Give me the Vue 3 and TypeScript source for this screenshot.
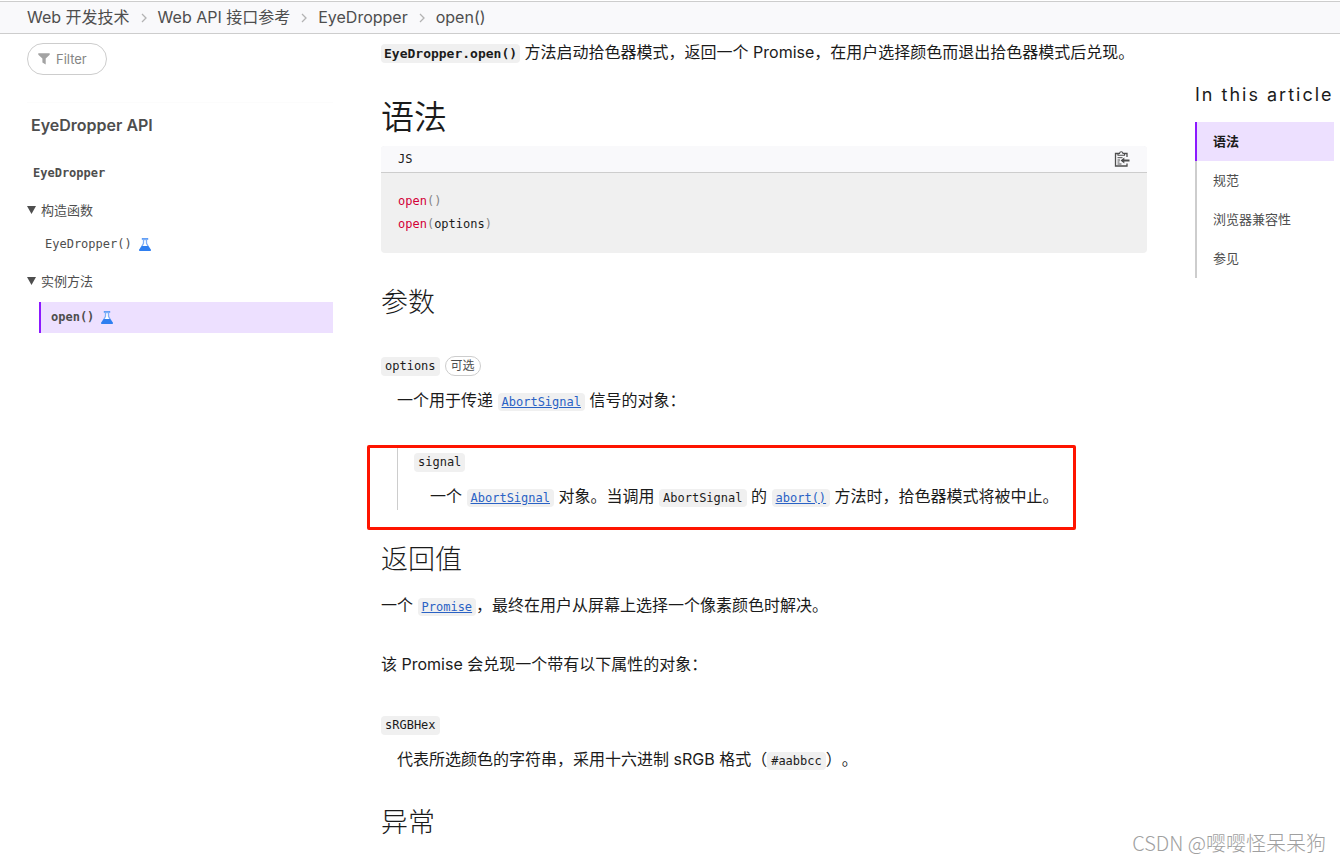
<script setup lang="ts">
interface TocItem {
  label: string
  active: boolean
}

const crumbs: string[] = ['Web 开发技术', 'Web API 接口参考', 'EyeDropper', 'open()']

const toc: TocItem[] = [
  { label: '语法', active: true },
  { label: '规范', active: false },
  { label: '浏览器兼容性', active: false },
  { label: '参见', active: false },
]
</script>

<template>
  <div class="page">
    <nav class="breadcrumbs" aria-label="Breadcrumb">
      <ol class="crumb-list">
        <li v-for="(crumb, i) in crumbs" :key="crumb" class="crumb">
          <svg v-if="i > 0" class="chevron" viewBox="0 0 6 10" aria-hidden="true">
            <path d="M1 1l4 4-4 4" fill="none" stroke="#b3b3b3" stroke-width="1.3" />
          </svg>
          <a href="#" class="crumb-link">{{ crumb }}</a>
        </li>
      </ol>
    </nav>

    <div class="columns">
      <aside class="sidebar">
        <label class="filter">
          <svg class="funnel" viewBox="0 0 12 12" aria-hidden="true">
            <path d="M.3.3h11.4v1.4L7.700 5.500v6L4.400 9.600V5.500L.3 1.700z" fill="#a3a3a3" />
          </svg>
          <input class="filter-input" type="text" placeholder="Filter" aria-label="Filter" />
        </label>

        <nav class="side-nav" aria-label="EyeDropper API">
          <a href="#" class="side-title">EyeDropper API</a>
          <a href="#" class="side-interface">EyeDropper</a>
          <details class="group" open>
            <summary class="group-head">
              <svg class="triangle" viewBox="0 0 9 8" aria-hidden="true"><path d="M0 0h9L4.5 8z" fill="#4e4e4e" /></svg>
              构造函数
            </summary>
            <a href="#" class="side-item">
              EyeDropper()
              <svg class="flask" viewBox="0 0 12 13" aria-hidden="true">
                <path d="M2.800 0h6.400v1.800H2.800z" fill="#5b9bf5" />
                <path d="M4.500 1.500v3.800L1 11.800h10L7.500 5.300V1.500z" fill="#fff" stroke="#7fb0f8" stroke-width="1.300" />
                <path d="M2.800 8h6.400l2.700 3.800c.2.700-.1 1.200-.8 1.200H.9c-.7 0-1-.5-.8-1.200z" fill="#2f7ff0" />
              </svg>
            </a>
          </details>
          <details class="group methods" open>
            <summary class="group-head">
              <svg class="triangle" viewBox="0 0 9 8" aria-hidden="true"><path d="M0 0h9L4.5 8z" fill="#4e4e4e" /></svg>
              实例方法
            </summary>
            <a href="#" class="side-item current" aria-current="page">
              open()
              <svg class="flask" viewBox="0 0 12 13" aria-hidden="true">
                <path d="M2.800 0h6.400v1.800H2.800z" fill="#5b9bf5" />
                <path d="M4.500 1.500v3.800L1 11.800h10L7.500 5.300V1.500z" fill="#fff" stroke="#7fb0f8" stroke-width="1.300" />
                <path d="M2.800 8h6.400l2.700 3.800c.2.700-.1 1.200-.8 1.200H.9c-.7 0-1-.5-.8-1.200z" fill="#2f7ff0" />
              </svg>
            </a>
          </details>
        </nav>
      </aside>

      <main class="content">
        <p class="text"><code class="chip strong">EyeDropper.open()</code> 方法启动拾色器模式，返回一个 Promise，在用户选择颜色而退出拾色器模式后兑现。</p>

        <h2 class="h2">语法</h2>
        <div class="example">
          <div class="example-head">
            <span>JS</span>
            <button type="button" class="copy" aria-label="Copy to clipboard">
              <svg viewBox="0 0 16 16" width="16" height="16" fill="none" stroke="#4e4e4e" aria-hidden="true">
                <path d="M13 6V2.500H1.500v12.500H13v-2.500" stroke-width="1.300" />
                <path d="M4 2.500v1.800h6.500V2.500H9C8.800 1.300 8.200.7 7.250.7S5.700 1.300 5.500 2.500z" stroke-width="1.100" fill="#f9f9fb" />
                <path d="M3.500 6.700h5M3.500 9h2.500M3.500 11h2M3.500 13h4" stroke-width="1" />
                <path d="M15.500 9.500H8" stroke-width="1.800" />
                <path d="M10.300 6.400v6.200L6.600 9.500z" fill="#4e4e4e" stroke="none" />
              </svg>
            </button>
          </div>
          <pre class="code"><code><span class="fn">open</span><span class="punct">()</span>
<span class="fn">open</span><span class="punct">(</span>options<span class="punct">)</span></code></pre>
        </div>

        <h3 class="h3">参数</h3>
        <dl class="defs">
          <dt class="term"><code class="chip">options</code><span class="badge">可选</span></dt>
          <dd class="desc">
            <p class="text">一个用于传递 <a href="#" class="link"><code class="chip">AbortSignal</code></a> 信号的对象：</p>
            <div class="nested">
              <dl class="nested-defs">
                <dt class="term"><code class="chip">signal</code></dt>
                <dd class="desc">
                  <p class="text">一个 <a href="#" class="link"><code class="chip">AbortSignal</code></a> 对象。当调用 <code class="chip">AbortSignal</code> 的 <a href="#" class="link"><code class="chip">abort()</code></a> 方法时，拾色器模式将被中止。</p>
                </dd>
              </dl>
              <div class="marker" aria-hidden="true"></div>
            </div>
          </dd>
        </dl>

        <h3 class="h3">返回值</h3>
        <p class="text">一个 <a href="#" class="link"><code class="chip">Promise</code></a>，最终在用户从屏幕上选择一个像素颜色时解决。</p>
        <p class="text follow">该 Promise 会兑现一个带有以下属性的对象：</p>
        <dl class="defs">
          <dt class="term"><code class="chip">sRGBHex</code></dt>
          <dd class="desc">
            <p class="text">代表所选颜色的字符串，采用十六进制 sRGB 格式（<code class="chip">#aabbcc</code>）。</p>
          </dd>
        </dl>

        <h3 class="h3">异常</h3>
      </main>

      <aside class="toc">
        <h2 class="toc-title">In this article</h2>
        <ul class="toc-list">
          <li v-for="item in toc" :key="item.label">
            <a href="#" class="toc-link" :class="{ active: item.active }">{{ item.label }}</a>
          </li>
        </ul>
      </aside>
    </div>

    <div class="watermark">CSDN @嘤嘤怪呆呆狗</div>
  </div>
</template>

<style>
body {
  margin: 0;
  background: #fff;
}
</style>

<style scoped>
.page {
  position: relative;
  box-sizing: border-box;
  min-height: 100vh;
  padding-top: 1px;
  color: #1b1b1b;
  font-family: Inter, "Noto Sans CJK SC", sans-serif;
  font-size: 16px;
  font-weight: 400;
  line-height: 28px;
  text-spacing-trim: space-all;
}

a {
  color: inherit;
  text-decoration: none;
}

.breadcrumbs {
  padding: 0 27px;
  background: #f9f9fb;
  border-top: 1px solid #cdcdcd;
  border-bottom: 1px solid #cdcdcd;
}

.crumb-list {
  display: flex;
  margin: 0;
  padding: 0;
  list-style: none;
  line-height: 31px;
  color: #4e4e4e;
}

.crumb {
  display: flex;
  align-items: center;
}

.chevron {
  width: 6px;
  height: 10px;
  margin: 0 11px;
}

.columns {
  display: grid;
  grid-template-columns: 306px minmax(0, 1fr) 139px;
  column-gap: 48px;
  padding: 0 6px 0 27px;
}

/* Sidebar */
.sidebar {
  padding-top: 9px;
  color: #4e4e4e;
}

.filter {
  display: flex;
  align-items: center;
  gap: 6px;
  box-sizing: border-box;
  width: 80px;
  height: 32px;
  padding: 0 10px;
  border: 1px solid #cdcdcd;
  border-radius: 16px;
}

.funnel {
  flex: none;
  width: 12px;
  height: 12px;
}

.filter-input {
  min-width: 0;
  width: 100%;
  padding: 0;
  border: 0;
  outline: 0;
  background: transparent;
  color: #4e4e4e;
  font: 13px/20px Inter, "Noto Sans CJK SC", sans-serif;
}

.filter-input::placeholder {
  color: #858585;
  opacity: 1;
}

.side-nav {
  display: flex;
  flex-direction: column;
  margin-top: 27px;
  border-top: 1px solid #fcfcfc;
  font-size: 13px;
}

.side-title {
  margin-top: 8px;
  padding-left: 4px;
  font-size: 16px;
  font-weight: 600;
}

.side-interface {
  margin-top: 20px;
  padding-left: 6px;
  font-family: "DejaVu Sans Mono", monospace;
  font-size: 12px;
  font-weight: 700;
}

.group {
  margin-top: 9px;
}

.group.methods {
  margin-top: 7px;
}

.group-head {
  display: flex;
  align-items: center;
  gap: 5px;
  list-style: none;
}

.triangle {
  width: 9px;
  height: 8px;
}

.side-item {
  display: flex;
  align-items: center;
  gap: 7px;
  margin: 5px 0 0 12px;
  padding-left: 6px;
  font-family: "DejaVu Sans Mono", monospace;
  font-size: 12px;
  line-height: 31px;
}

.side-item.current {
  margin-top: 7px;
  padding-left: 10px;
  border-left: 2px solid #8c19ff;
  background: #ede0ff;
  font-weight: 700;
}

.flask {
  width: 12px;
  height: 13px;
}

/* Article */
.content {
  padding-top: 4px;
}

.text {
  margin: 0;
}

.follow {
  margin: 31px 0 33px;
}

.h2 {
  margin: 29px 0 7px;
  font-size: 33px;
  font-weight: 350;
  line-height: 44px;
}

.h3 {
  margin: 32px 0 13px;
  font-size: 27px;
  font-weight: 300;
  line-height: 36px;
}

.chip {
  padding: 2px 4px;
  border-radius: 4px;
  background: #f0f0f0;
  font-family: "DejaVu Sans Mono", monospace;
  font-size: 12px;
  line-height: 15px;
}

.chip.strong {
  padding: 2px 3px;
  font-size: 13px;
  font-weight: 700;
}

.link .chip {
  color: #2a62c5;
  text-decoration: underline;
}

.example {
  overflow: hidden;
  border-radius: 4px;
  background: #f0f0f0;
  font-family: "DejaVu Sans Mono", monospace;
  font-size: 12px;
}

.example-head {
  display: flex;
  align-items: center;
  justify-content: space-between;
  padding: 0 17px;
  border-bottom: 1px solid #cdcdcd;
  background: #f9f9fb;
  line-height: 26px;
}

.copy {
  display: flex;
  padding: 0;
  border: 0;
  background: transparent;
}

.code {
  margin: 0;
  padding: 17px;
  line-height: 23px;
}

.code code {
  font: inherit;
}

.fn {
  color: #d30038;
}

.punct {
  color: #858585;
}

.defs {
  margin: 31px 0 0;
}

.term {
  display: flex;
  align-items: center;
  gap: 5px;
  min-height: 28px;
}

.badge {
  padding: 0 5px;
  border: 1px solid #cdcdcd;
  border-radius: 10px;
  color: #4e4e4e;
  font-size: 12px;
  line-height: 18px;
}

.desc {
  margin: 6px 0 0 16px;
}

.nested {
  position: relative;
  margin-top: 34px;
  padding-left: 16px;
  border-left: 1px solid #cdcdcd;
}

.nested-defs {
  margin: 0;
}

/* Red frame drawn over the nested definition */
.marker {
  position: absolute;
  top: -3px;
  right: 71px;
  bottom: -20px;
  left: -31px;
  border: 3px solid #fe1400;
  border-radius: 2px;
}

/* Table of contents */
.toc {
  padding-top: 47px;
}

.toc-title {
  margin: 0 0 13px;
  font-size: 18px;
  font-weight: 400;
  letter-spacing: 2px;
  white-space: nowrap;
}

.toc-list {
  margin: 0;
  padding: 0;
  list-style: none;
  color: #4e4e4e;
  font-size: 13px;
  line-height: 39px;
}

.toc-link {
  display: block;
  padding-left: 16px;
  border-left: 2px solid #cdcdcd;
}

.toc-link.active {
  border-left-color: #8c19ff;
  background: #ede0ff;
  color: #1b1b1b;
  font-weight: 700;
}

.watermark {
  position: absolute;
  right: 14px;
  bottom: 5px;
  color: #a0a0a0;
  font-family: "Noto Sans CJK SC", sans-serif;
  font-size: 20px;
  font-weight: 300;
}
</style>
